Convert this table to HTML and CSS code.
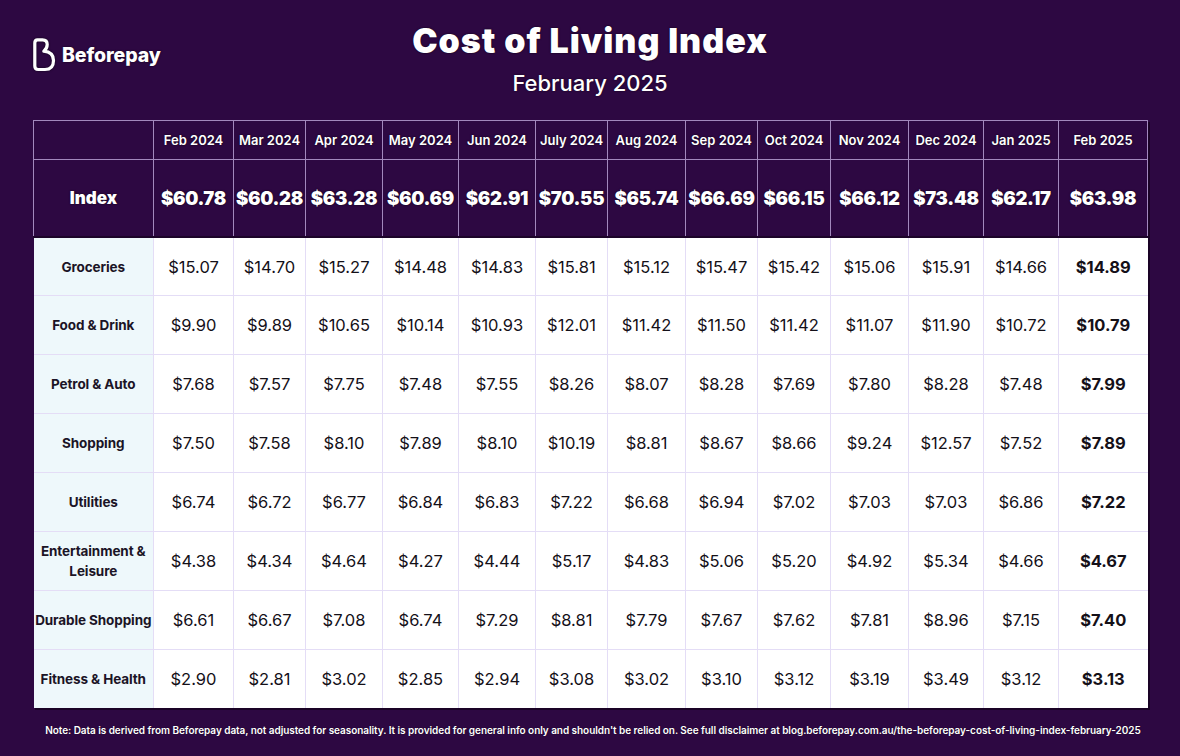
FILE: index.html
```html
<!DOCTYPE html>
<html lang="en">
<head>
<meta charset="utf-8">
<title>Cost of Living Index</title>
<link rel="stylesheet" href="styles.css">
</head>
<body>
<div class="page">
  <header class="top">
    <div class="brand">
      <svg class="brand-icon" viewBox="0 0 23 34" width="23" height="34" aria-hidden="true">
        <path d="M4.5 1.8 H9.5 Q14.2 1.8 14.2 6.5 Q14.2 10.5 10.8 13.2 Q20.5 14.2 20.5 22.5 Q20.5 31.5 12 31.5 H5.2 Q1.8 31.5 1.8 28 V5 Q1.8 1.8 4.5 1.8 Z" fill="none" stroke="#fff" stroke-width="3.2" stroke-linejoin="round"/>
      </svg>
      <span class="brand-name">Beforepay</span>
    </div>
    <div class="titles">
      <h1 class="title">Cost of Living Index</h1>
      <p class="subtitle">February 2025</p>
    </div>
    <div class="spacer"></div>
  </header>

  <table class="cli">
    <colgroup>
      <col style="width:120px"><col style="width:80px"><col style="width:72px"><col style="width:77px"><col style="width:76px"><col style="width:77px"><col style="width:72px"><col style="width:78px"><col style="width:72px"><col style="width:73px"><col style="width:78px"><col style="width:75px"><col style="width:75px"><col style="width:89px">
    </colgroup>
    <thead>
      <tr class="months">
        <th></th><th>Feb 2024</th><th>Mar 2024</th><th>Apr 2024</th><th>May 2024</th><th>Jun 2024</th><th>July 2024</th><th>Aug 2024</th><th>Sep 2024</th><th>Oct 2024</th><th>Nov 2024</th><th>Dec 2024</th><th>Jan 2025</th><th>Feb 2025</th>
      </tr>
      <tr class="index">
        <th>Index</th><td>$60.78</td><td>$60.28</td><td>$63.28</td><td>$60.69</td><td>$62.91</td><td>$70.55</td><td>$65.74</td><td>$66.69</td><td>$66.15</td><td>$66.12</td><td>$73.48</td><td>$62.17</td><td>$63.98</td>
      </tr>
    </thead>
    <tbody>
      <tr><th>Groceries</th><td>$15.07</td><td>$14.70</td><td>$15.27</td><td>$14.48</td><td>$14.83</td><td>$15.81</td><td>$15.12</td><td>$15.47</td><td>$15.42</td><td>$15.06</td><td>$15.91</td><td>$14.66</td><td class="cur">$14.89</td></tr>
      <tr><th>Food &amp; Drink</th><td>$9.90</td><td>$9.89</td><td>$10.65</td><td>$10.14</td><td>$10.93</td><td>$12.01</td><td>$11.42</td><td>$11.50</td><td>$11.42</td><td>$11.07</td><td>$11.90</td><td>$10.72</td><td class="cur">$10.79</td></tr>
      <tr><th>Petrol &amp; Auto</th><td>$7.68</td><td>$7.57</td><td>$7.75</td><td>$7.48</td><td>$7.55</td><td>$8.26</td><td>$8.07</td><td>$8.28</td><td>$7.69</td><td>$7.80</td><td>$8.28</td><td>$7.48</td><td class="cur">$7.99</td></tr>
      <tr><th>Shopping</th><td>$7.50</td><td>$7.58</td><td>$8.10</td><td>$7.89</td><td>$8.10</td><td>$10.19</td><td>$8.81</td><td>$8.67</td><td>$8.66</td><td>$9.24</td><td>$12.57</td><td>$7.52</td><td class="cur">$7.89</td></tr>
      <tr><th>Utilities</th><td>$6.74</td><td>$6.72</td><td>$6.77</td><td>$6.84</td><td>$6.83</td><td>$7.22</td><td>$6.68</td><td>$6.94</td><td>$7.02</td><td>$7.03</td><td>$7.03</td><td>$6.86</td><td class="cur">$7.22</td></tr>
      <tr><th>Entertainment &amp;<br>Leisure</th><td>$4.38</td><td>$4.34</td><td>$4.64</td><td>$4.27</td><td>$4.44</td><td>$5.17</td><td>$4.83</td><td>$5.06</td><td>$5.20</td><td>$4.92</td><td>$5.34</td><td>$4.66</td><td class="cur">$4.67</td></tr>
      <tr><th>Durable Shopping</th><td>$6.61</td><td>$6.67</td><td>$7.08</td><td>$6.74</td><td>$7.29</td><td>$8.81</td><td>$7.79</td><td>$7.67</td><td>$7.62</td><td>$7.81</td><td>$8.96</td><td>$7.15</td><td class="cur">$7.40</td></tr>
      <tr><th>Fitness &amp; Health</th><td>$2.90</td><td>$2.81</td><td>$3.02</td><td>$2.85</td><td>$2.94</td><td>$3.08</td><td>$3.02</td><td>$3.10</td><td>$3.12</td><td>$3.19</td><td>$3.49</td><td>$3.12</td><td class="cur">$3.13</td></tr>
    </tbody>
  </table>

  <p class="note">Note: Data is derived from Beforepay data, not adjusted for seasonality. It is provided for general info only and shouldn't be relied on. See full disclaimer at blog.beforepay.com.au/the-beforepay-cost-of-living-index-february-2025</p>
</div>
</body>
</html>
```

FILE: styles.css
```css
html, body {
  margin: 0;
  padding: 0;
  background: #2d0842;
}

body {
  width: 1180px;
  height: 756px;
  overflow: hidden;
  font-family: Inter, "Liberation Sans", sans-serif;
  color: #fff;
}

.page {
  padding: 0 33px;
}

.top {
  display: grid;
  grid-template-columns: 1fr auto 1fr;
  align-items: start;
  padding-top: 21px;
  height: 100px;
  box-sizing: border-box;
}

.brand {
  display: flex;
  align-items: center;
  gap: 6px;
  margin-top: 17px;
}

.brand-icon {
  display: block;
  filter: drop-shadow(0 0 1px rgba(0,0,0,0.6));
}

.brand-name {
  font-size: 19.5px;
  font-weight: 800;
  letter-spacing: -0.1px;
  text-shadow: 0 0 2px rgba(0,0,0,0.7);
}

.titles {
  text-align: center;
}

.title {
  margin: 0;
  font-size: 34px;
  line-height: 40px;
  font-weight: 900;
  letter-spacing: 1px;
  text-shadow: 0 0 2px rgba(0,0,0,0.8);
}

.subtitle {
  margin: 9px 0 0;
  font-size: 22px;
  line-height: 26px;
  font-weight: 500;
  text-shadow: 0 0 2px rgba(0,0,0,0.7);
}

.cli {
  width: 1114px;
  table-layout: fixed;
  border-collapse: collapse;
  margin-top: 20px;
  box-shadow: 2px 2px 0 #1a0326;
}

.cli th,
.cli td {
  text-align: center;
  vertical-align: middle;
  padding: 0;
}

.months th {
  height: 38px;
  font-size: 13px;
  font-weight: 600;
  border: 1.5px solid #a288bd;
  text-shadow: 0 0 2px rgba(0,0,0,0.8);
}

.index th,
.index td {
  height: 76px;
  border: 1.5px solid #a288bd;
  border-bottom: 2px solid #1c0429;
  font-weight: 900;
  text-shadow: 0 0 2px rgba(0,0,0,0.8);
}

.index th {
  font-size: 17px;
}

.index td {
  font-size: 18.5px;
  letter-spacing: -0.3px;
}

tbody tr {
  height: 58.9px;
}

tbody th,
tbody td {
  border: 1px solid #e4ddf6;
  background: #fff;
  color: #141018;
}

tbody th {
  background: #eef8fb;
  font-size: 13.5px;
  font-weight: 700;
  line-height: 20px;
  color: #1b1426;
  border-left: 0;
  letter-spacing: -0.1px;
}

tbody td {
  font-size: 16.5px;
  font-weight: 400;
}

tbody td.cur {
  font-weight: 700;
  border-right: 0;
}

tbody tr:last-child th,
tbody tr:last-child td {
  border-bottom: 0;
}

.note {
  margin: 16px 0 0;
  padding-left: 6px;
  text-align: center;
  font-size: 10px;
  font-weight: 600;
  letter-spacing: -0.05px;
  white-space: nowrap;
  text-shadow: 0 0 1px rgba(0,0,0,0.7);
}
```
